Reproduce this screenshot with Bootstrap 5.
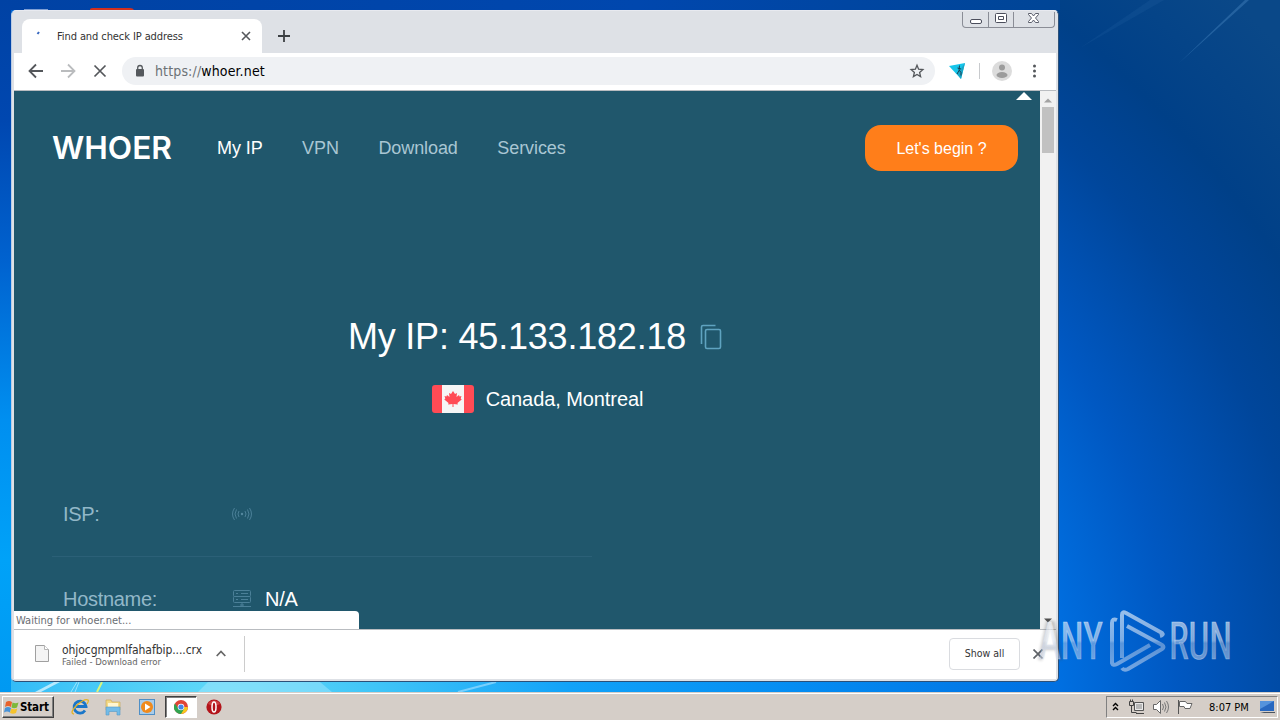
<!DOCTYPE html>
<html lang="en">
<head>
    <meta charset="UTF-8">
    <meta name="viewport" content="width=device-width, initial-scale=1.0">
    <title>Find and check IP address</title>
    <link href="https://cdn.jsdelivr.net/npm/bootstrap@5.3.2/dist/css/bootstrap.min.css" rel="stylesheet">
    <style>
        body {
            width: 1280px;
            height: 720px;
            overflow: hidden;
            font-family: "DejaVu Sans Condensed", "DejaVu Sans", sans-serif;
            font-stretch: condensed;
            font-size: 11px;
            line-height: 1.2;
            color: #333;
        }

        svg { display: block; flex-shrink: 0; }

        .desktop {
            background:
                linear-gradient(#0042a4 0, #0047b0 120px, #0062cf 260px, #008ff0 420px, #00a2f8 560px, #0099f2 692px) 0 0 / 11px 692px no-repeat,
                linear-gradient(90deg, #0042a4, #0047ae 60%, #004596) 0 0 / 1060px 10px no-repeat,
                radial-gradient(ellipse 1100px 900px at 220px 720px, #66dcf8 0, #3fc4f7 15%, #12a2f8 32%, #058df2 52%, #0070e2 76%, #0058c2 87%, #00469b 100%, #004088 109%, #0a4888 122%);
        }

        .wallpaper-rays { left: 0; top: 0; }

        /* browser window */
        .browser {
            left: 11px;
            top: 10px;
            width: 1048px;
            height: 672px;
            background: #dee1e6;
            border: 1px solid #2c5078;
            border-top-color: #e8eaf0;
            border-left-color: #b9cbe4;
            border-radius: 5px;
            padding: 1px 2px 2px;
        }

        .tab-strip { height: 41px; }
        .tab-page {
            width: 240px;
            height: 34px;
            margin: 7px 0 0 8px;
            border-radius: 8px 8px 0 0;
            background: #fff;
            padding: 0 11px 0 14px;
        }
        .tab-page .tab-title { margin-left: 14px; padding-top: 2px; letter-spacing: -.09px; }
        .win-buttons { height: 16px; width: 93px; border: 1px solid #8a8d96; border-top: 0; border-radius: 0 0 4px 4px; margin-right: 1px; }
        .win-buttons > span + span { border-left: 1px solid #8a8d96; }
        .win-buttons svg { margin-top: -1px; }

        .toolbar { height: 38px; background: #fff; border-bottom: 1px solid #b9bcc0; padding: 0 0 2px 14px; }
        .omnibox { width: 813px; height: 28px; border-radius: 14px; background: #eff1f4; margin-left: 14px; padding: 0 10px 0 12px; }
        .omnibox .url { font-size: 14px; letter-spacing: .14px; color: #6c7176; margin-left: 9px; padding-top: 2px; }

        /* page */
        .viewport { height: 538px; }
        .site { background: #20576c; font-family: "Liberation Sans", Arial, sans-serif; color: #fff; padding: 34px 22px 0 38px; }
        .site-header { height: 46px; }
        .site-header a { color: #a9c6d3; font-size: 18px; letter-spacing: -.08px; text-decoration: none; padding-top: 2px; }
        .site-header a.current { color: #fff; }
        .btn-begin, .btn-begin:hover {
            background: #ff7e1a; color: #fff; border: 0; border-radius: 16px;
            width: 153px; height: 46px; font-size: 16px; padding: 2px 0 0;
        }
        .ip-line { margin-top: 144px; height: 44px; font-size: 36px; letter-spacing: -.2px; }
        .place-line { margin-top: 26px; height: 28px; font-size: 20px; padding-left: 5px; }
        .info-list { margin-top: 59px; width: 540px; font-size: 20px; }
        .info-line { height: 85px; padding-left: 11px; border-bottom: 1px solid #2b6077; }
        .info-line .caption { width: 169px; color: #92b7c8; letter-spacing: -.3px; }
        .to-top { right: 8px; top: 1px; }
        .status-bubble { left: 0; bottom: 0; width: 345px; height: 18px; background: #fff; border-radius: 0 4px 0 0; color: #6a6e73; padding: 3px 0 0 2px; }

        .scroll-track { width: 16px; background: #f1f1f1; }
        .scroll-thumb { width: 12px; height: 46px; background: #c1c1c1; }

        /* download shelf */
        .shelf { height: 50px; background: #fff; border-top: 1px solid #b9bcc0; padding: 0 0 2px 21px; }
        .shelf .file-name { font-size: 12px; letter-spacing: -.05px; line-height: 14px; color: #333; margin-top: 2px; }
        .shelf .file-state { font-size: 9.500px; line-height: 9px; color: #666; }
        .shelf .rule { width: 1px; height: 36px; background: #ccc; }
        .btn-show, .btn-show:hover { width: 71px; height: 32px; border: 1px solid #dadce0; border-radius: 4px; font-size: 10.500px; padding: 0; color: #333; background: #fff; }

        .watermark { left: 1030px; top: 600px; }

        /* taskbar */
        .taskbar { height: 28px; background: #d5cec8; border-top: 1px solid #d5cec8; box-shadow: inset 0 1px #fff; padding: 2px 2px 1px; color: #000; }
        .start {
            width: 52px; height: 22px; font-weight: 700; font-size: 11.500px;
            border: 1px solid; border-color: #fff #404040 #404040 #fff; box-shadow: inset -1px -1px #808080;
        }
        .task-active { width: 32px; height: 22px; background: #fff; border: 1px solid; border-color: #404040 #fff #fff #404040; box-shadow: inset 1px 1px #808080; }
        .tray { width: 172px; height: 22px; border: 1px solid; border-color: #808080 #fff #fff #808080; padding-left: 5px; }
    </style>
</head>
<body>
<div class="desktop d-flex flex-column vh-100 position-relative">
    <svg class="wallpaper-rays position-absolute" width="1280" height="692">
        <path d="M35 692L54 682h6L41 692z" fill="#d5f2ff" opacity=".8"/>
        <path d="M71 692l6-10M75 692l4-10" stroke="#bdeeff" opacity=".7"/>
        <path d="M97 692l5-10" stroke="#d8f57c" stroke-width="2"/>
        <path d="M458 692l38-10" stroke="#9bdcff" stroke-width="2" opacity=".7"/>
        <path d="M198 692l10-10h112l12 10z" fill="#c6f2ff" opacity=".35"/>
        <path d="M1178 64l67-64h4z" fill="#5c9bd2" opacity=".32"/>
        <path d="M1080 48L1150 0h14z" fill="#4d8ac5" opacity=".1"/>
        <path d="M90 10v-1q1-1 3-1h37q3 0 4 2z" fill="#d4301e"/>
        <path d="M24 9.500h24" stroke="#7f9fd4"/>
    </svg>

    <div class="browser position-absolute d-flex flex-column">
        <div class="tab-strip d-flex">
            <div class="tab-page d-flex align-items-center">
                <svg width="7" height="14"><path d="M1.500 5l1.500-2" stroke="#3868c0" stroke-width="2"/></svg>
                <span class="tab-title">Find and check IP address</span>
                <svg class="ms-auto" width="10" height="10"><path d="M1 1l8 8M9 1l-8 8" stroke="#55585c" stroke-width="1.600"/></svg>
            </div>
            <svg width="12" height="12" style="margin:18px 0 0 16px"><path d="M6 0v12M0 6h12" stroke="#3c4043" stroke-width="1.800"/></svg>
            <div class="win-buttons d-flex ms-auto">
                <span class="d-flex justify-content-center" style="width:25px"><svg width="14" height="16"><rect x="1.500" y="8.500" width="11" height="4" rx="1.500" fill="#fff" stroke="#4b4e5c"/></svg></span>
                <span class="d-flex justify-content-center" style="width:25px"><svg width="14" height="16"><path d="M2.500 2.500h9q1 0 1 1v7q0 1-1 1h-9q-1 0-1-1v-7q0-1 1-1zM4.500 5.500h5v3h-5z" fill="#fff" stroke="#4b4e5c"/></svg></span>
                <span class="d-flex justify-content-center flex-fill"><svg width="14" height="16"><path d="M1.500 2.500h3L6.500 5l2-2.500h3v1L8.500 7l3 3.500v1h-3l-2-2.500-2 2.500h-3v-1l3-3.500-3-3.500z" fill="#fff" stroke="#4b4e5c" stroke-width=".9"/></svg></span>
            </div>
        </div>

        <div class="toolbar d-flex align-items-center">
            <svg width="16" height="16"><path d="M15 8H2M8 1.500L1.500 8 8 14.500" fill="none" stroke="#54575b" stroke-width="1.800"/></svg>
            <svg width="16" height="16" style="margin-left:16px"><path d="M1 8h13M8 1.500L14.500 8 8 14.500" fill="none" stroke="#babcbe" stroke-width="1.800"/></svg>
            <svg width="16" height="16" style="margin-left:16px"><path d="M2.500 2.500l11 11M13.500 2.500l-11 11" stroke="#54575b" stroke-width="1.700"/></svg>
            <div class="omnibox d-flex align-items-center">
                <svg width="12" height="14"><rect x="2" y="5" width="8" height="7.500" rx="1" fill="#55595d"/><path d="M3.700 6V3.800a2.300 2.300 0 0 1 4.600 0V6" fill="none" stroke="#55595d" stroke-width="1.300"/></svg>
                <span class="url">https://<span class="text-black">whoer.net</span></span>
                <svg class="ms-auto" width="16" height="16"><path d="M8 2.200l1.600 4 4.300.3-3.300 2.900 1 4.200L8 11.400l-3.600 2.200 1-4.200-3.300-2.900 4.300-.3z" fill="none" stroke="#54575b" stroke-width="1.300"/></svg>
            </div>
            <svg width="18" height="18" style="margin-left:13px"><path d="M1 4L17 1l-4 16z" fill="#16c5ea"/><path d="M17 1l-4 16-4-5z" fill="#1aa5c6"/><path d="M11.500 3.500l-.5 5-2 3.500M11 8l2 2.500v3M9.500 6l3.500 1" fill="none" stroke="#163e50"/></svg>
            <svg width="2" height="16" style="margin-left:13px"><path d="M.5 0v16" stroke="#c8cacd"/></svg>
            <svg width="20" height="20" style="margin-left:11px"><circle cx="10" cy="10" r="10" fill="#dcdcdc"/><circle cx="10" cy="6.500" r="3" fill="#9c9c9c"/><ellipse cx="10" cy="14" rx="5.500" ry="3" fill="#9c9c9c"/></svg>
            <svg width="4" height="14" style="margin-left:20px"><circle cx="2.500" cy="2" r="1.500" fill="#54575b"/><circle cx="2.500" cy="7" r="1.500" fill="#54575b"/><circle cx="2.500" cy="12" r="1.500" fill="#54575b"/></svg>
        </div>

        <div class="viewport d-flex position-relative overflow-hidden">
            <main class="site flex-fill position-relative overflow-hidden">
                <svg class="to-top position-absolute" width="16" height="8"><path d="M0 8l8-8 8 8z" fill="#fff"/></svg>
                <header class="site-header d-flex align-items-center">
                    <svg width="124" height="36"><text x="0" y="29" font-family="Inter, sans-serif" font-size="31" font-weight="600" fill="#fff" textLength="120" lengthAdjust="spacingAndGlyphs">WHOER</text></svg>
                    <nav class="d-flex" style="gap:39.500px;margin-left:41px">
                        <a href="#" class="current">My IP</a>
                        <a href="#">VPN</a>
                        <a href="#">Download</a>
                        <a href="#">Services</a>
                    </nav>
                    <button class="btn btn-begin ms-auto">Let's begin ?</button>
                </header>

                <div class="ip-line d-flex justify-content-center align-items-center">
                    <span>My IP: 45.133.182.18</span>
                    <svg width="22" height="26" style="margin-left:14px"><path d="M1.500 20V3q0-1.500 1.500-1.500h12.500" fill="none" stroke="#5fa3c0" stroke-width="1.600"/><rect x="5.500" y="5.500" width="15" height="19" rx="1.500" fill="none" stroke="#5fa3c0" stroke-width="1.600"/></svg>
                </div>
                <div class="place-line d-flex justify-content-center align-items-center">
                    <svg width="42" height="28"><rect width="42" height="28" rx="3" fill="#ff4b55"/><path d="M10 0h22v28H10z" fill="#f5f5f5"/><path d="M21 6l2 3 2-1-.5 4 2.500-2 .5 1.500 2-.5-.8 2.500 1 1-4.200 3.500.3 1.500-4.300-.5V22h-1v-3l-4.300.5.3-1.500-4.200-3.500 1-1-.8-2.500 2 .5.500-1.500 2.500 2L17 8l2 1z" fill="#ff4b55"/></svg>
                    <span style="margin-left:12px;letter-spacing:-.08px">Canada, Montreal</span>
                </div>

                <div class="info-list">
                    <div class="info-line d-flex align-items-center">
                        <span class="caption">ISP:</span>
                        <svg width="20" height="14" fill="none" stroke="#4b8098"><circle cx="10" cy="7" r="1.200" fill="#5689a0" stroke="none"/><path d="M7 4q-2 3 0 6M4.500 2.500q-3 4.500 0 9M2.500 1q-4 6 0 12M13 4q2 3 0 6M15.500 2.500q3 4.500 0 9M17.500 1q4 6 0 12"/></svg>
                    </div>
                    <div class="info-line d-flex align-items-center">
                        <span class="caption">Hostname:</span>
                        <svg width="20" height="18" fill="none" stroke="#4b8098"><rect x="1.500" y=".5" width="17" height="6" rx="1"/><rect x="1.500" y="6.500" width="17" height="6" rx="1"/><path d="M4 3.500h2M9 3.500h7M4 9.500h2M9 9.500h7M10 12.500v4M1 16.500h18M8 15h4"/></svg>
                        <span style="margin-left:13px;letter-spacing:-.2px">N/A</span>
                    </div>
                </div>
            </main>
            <div class="scroll-track d-flex flex-column align-items-center">
                <svg width="8" height="5" style="margin:7px 0 4px"><path d="M0 4.500L4 .5l4 4z" fill="#a3a3a3"/></svg>
                <div class="scroll-thumb"></div>
                <svg class="mt-auto" width="8" height="5" style="margin-bottom:6px"><path d="M0 .5h8l-4 4z" fill="#505050"/></svg>
            </div>
            <div class="status-bubble position-absolute">Waiting for whoer.net...</div>
        </div>

        <div class="shelf d-flex align-items-center">
            <svg width="14" height="17"><path d="M.5.500h9l4 4v12H.5z" fill="#f4f4f4" stroke="#a0a0a0"/><path d="M9.500.500v4h4" fill="#fff" stroke="#b5b5b5"/></svg>
            <div style="margin-left:13px;width:142px">
                <div class="file-name text-nowrap">ohjocgmpmlfahafbip....crx</div>
                <div class="file-state text-nowrap">Failed - Download error</div>
            </div>
            <svg width="10" height="7" style="margin-left:12px"><path d="M.7 6L5 1.500 9.300 6" fill="none" stroke="#666" stroke-width="1.700"/></svg>
            <div class="rule" style="margin-left:18px"></div>
            <button class="btn btn-show ms-auto">Show all</button>
            <svg width="10" height="10" style="margin:0 13px"><path d="M.5.500l9 9M9.500.500l-9 9" stroke="#5f6368" stroke-width="1.700"/></svg>
        </div>
    </div>

    <svg class="watermark position-absolute" width="230" height="80">
        <defs>
            <linearGradient id="wm" x1="0" y1="10" x2="0" y2="74" gradientUnits="userSpaceOnUse">
                <stop offset="0" stop-color="#fff" stop-opacity=".6"/>
                <stop offset=".48" stop-color="#e2eaf6" stop-opacity=".55"/>
                <stop offset=".52" stop-color="#ccd7ea" stop-opacity=".44"/>
                <stop offset="1" stop-color="#d8e2f4" stop-opacity=".55"/>
            </linearGradient>
            <filter id="soft" x="-20%" y="-20%" width="140%" height="140%"><feGaussianBlur stdDeviation="1.800"/></filter>
        </defs>
        <path d="M10 60L18 23h5l8 37M13 48h15" fill="none" stroke="#444" stroke-width="4" opacity=".28" filter="url(#soft)"/>
        <text x="9" y="59" font-family="Roboto, sans-serif" font-size="51" textLength="64" lengthAdjust="spacingAndGlyphs" fill="url(#wm)" stroke="url(#wm)" stroke-width=".7">ANY</text>
        <text x="139" y="59" font-family="Roboto, sans-serif" font-size="51" textLength="63" lengthAdjust="spacingAndGlyphs" fill="url(#wm)" stroke="url(#wm)" stroke-width=".7">RUN</text>
        <path d="M87 20q-5-2-5 3v40q1 3 5 1l33-19M92 58V15q0-4 4-2l36 20q2 2-2 3M97 26l35 19q3 2 0 4L98 69q-4 2-6-1" fill="none" stroke="url(#wm)" stroke-width="4" stroke-linejoin="round"/>
    </svg>

    <div class="taskbar d-flex align-items-center mt-auto">
        <div class="start d-flex align-items-center">
            <svg width="15" height="16" style="margin-left:1px"><path d="M2 3q3-2 6 0L7 8Q4 6 1 8z" fill="#e8622c"/><path d="M8.500 3.500q3 1.500 6 0L13 8.500q-3 1.500-5.500 0z" fill="#7db83a"/><path d="M1 9q3-2 6 0l-1 4.500q-3-2-6 0z" fill="#4893d8"/><path d="M7.300 9.500q3 1.500 6 0L12 14q-3 1.500-6 0z" fill="#f6c32c"/></svg>
            <span style="letter-spacing:-.15px;margin-left:1px;padding-top:1px">Start</span>
        </div>
        <svg width="18" height="18" style="margin-left:17px"><path d="M14 12.500A6 6 0 1 1 15 8.500H5" fill="none" stroke="#1976c9" stroke-width="2.800"/><path d="M3 16Q-2 15 6 7q8-7 11-5 1 1-1 4" fill="none" stroke="#e4b325" stroke-width="1.300"/></svg>
        <svg width="18" height="18" style="margin-left:15px"><path d="M2 2h5l1 2h8v8H2z" fill="#f3d987" stroke="#c6a44d" stroke-width=".6"/><path d="M4 5h10v4H4z" fill="#fff6d0"/><path d="M2 9h14v8h-3v-3.500H5V17H2z" fill="#72bce8" stroke="#5598c8" stroke-width=".6"/></svg>
        <svg width="18" height="18" style="margin-left:16px"><rect x="1.500" y="1.500" width="15" height="15" fill="#a9cce9" stroke="#4f8fc6"/><circle cx="9" cy="9" r="6" fill="#f08a1c"/><path d="M7 5.500v7l5.500-3.500z" fill="#fff"/></svg>
        <div class="task-active d-flex align-items-center justify-content-center" style="margin-left:9px">
            <svg width="14" height="14" viewBox="0 0 14 14"><circle cx="7" cy="7" r="7" fill="#e04436"/><path d="M7 7h6.900A7 7 0 0 1 6.500 14z" fill="#f8c81c"/><path d="M7 14l3-5-6-1L.9 3.500A7 7 0 0 0 7 14z" fill="#30a450"/><circle cx="7" cy="7" r="3.300" fill="#fff"/><circle cx="7" cy="7" r="2.600" fill="#4285e8"/></svg>
        </div>
        <svg width="16" height="16" style="margin-left:9px"><circle cx="8" cy="8" r="7.600" fill="#b3141a"/><path d="M2 5a7 7 0 0 1 12 0q-6 3-12 0" fill="#e05a58" opacity=".6"/><ellipse cx="8" cy="8" rx="2" ry="5" fill="#b3141a" stroke="#fff" stroke-width="1.500"/></svg>

        <div class="tray d-flex align-items-center ms-auto">
            <svg width="7" height="10"><path d="M1 4l2.500-2.500L6 4M1 8l2.500-2.500L6 8" fill="none" stroke="#000" stroke-width="1.400"/></svg>
            <svg width="18" height="16" style="margin-left:9px"><path d="M6.500 3.500h9v8h-9z" fill="#b8b8b8" stroke="#555"/><path d="M8 14.500h8M1.500 2.500v4h4v-4zM2.500.500v2M4.500.500v2M3.500 6.500v7h5" fill="none" stroke="#444"/><path d="M7.500 4.500h7v6h-7z" fill="none" stroke="#fff" stroke-width=".7"/></svg>
            <svg width="18" height="16" style="margin-left:6px"><path d="M1.500 5.500h3l4-4v13l-4-4h-3z" fill="#fff" stroke="#666"/><path d="M10.500 5q2 3 0 6M12.500 3.500q3 4.500 0 9M14.500 2q4 6 0 12" fill="none" stroke="#777"/></svg>
            <svg width="18" height="16" style="margin-left:6px"><path d="M2.500 1v14" stroke="#555"/><path d="M3.500 2.500h6l1.500 2h5l-2 5h-5l-1-2H3.500z" fill="#fff" stroke="#666"/></svg>
            <span class="text-nowrap" style="margin-left:15px;font-size:11px;width:41px;padding-top:1px">8:07 PM</span>
            <svg width="15" height="14" style="margin-left:10px"><path d="M0 1h14v10H0z" fill="#2868c0"/><path d="M0 1h14L0 9z" fill="#5593dc"/><path d="M0 12h15v1H4z" fill="#4b5460"/></svg>
        </div>
    </div>
</div>
<script src="https://cdn.jsdelivr.net/npm/bootstrap@5.3.2/dist/js/bootstrap.bundle.min.js"></script>
</body>
</html>
